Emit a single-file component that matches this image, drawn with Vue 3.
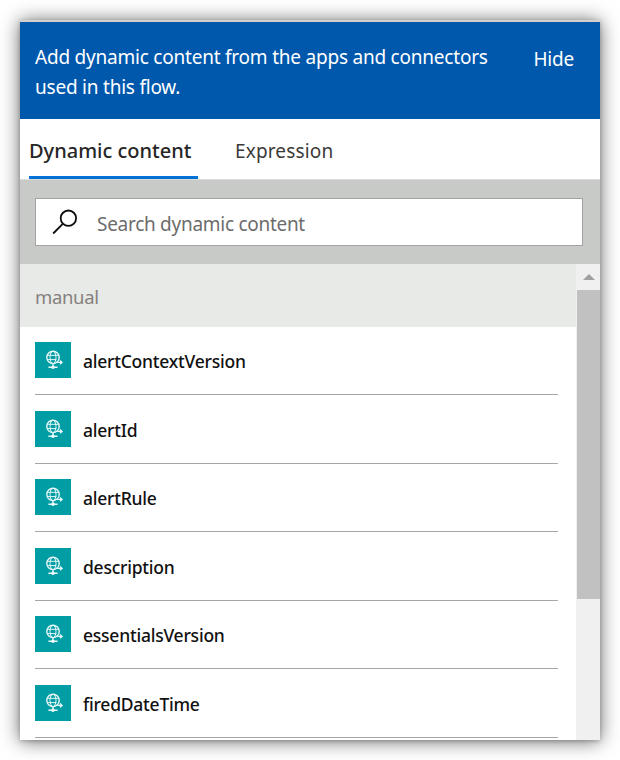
<script setup>
const tokens = [
  'alertContextVersion',
  'alertId',
  'alertRule',
  'description',
  'essentialsVersion',
  'firedDateTime',
]
</script>

<template>
  <main class="stage">
    <section class="panel">
      <header class="banner">
        <p class="intro">Add dynamic content from the apps and connectors<br />used in this flow.</p>
        <a class="hide">Hide</a>
      </header>

      <nav class="tabs">
        <a class="tab active">Dynamic content</a>
        <a class="tab expression">Expression</a>
      </nav>

      <div class="search-area">
        <div class="search">
          <svg class="lens" width="28" height="28" viewBox="0 0 28 28">
            <circle cx="17.4" cy="10.2" r="7.7" />
            <path d="M12 15.7 2.2 25.5" />
          </svg>
          <span class="placeholder">Search dynamic content</span>
        </div>
      </div>

      <div class="body">
        <div class="list">
          <h2 class="group">manual</h2>
          <ul class="rows">
            <li v-for="token in tokens" :key="token" class="row">
              <span class="badge">
                <svg width="36" height="36" viewBox="0 0 36 36">
                  <circle class="rim" cx="18" cy="15.4" r="6.2" />
                  <g class="grid">
                    <ellipse cx="18" cy="15.4" rx="3" ry="6.2" />
                    <path d="M12.4 13.3h11.2M12.4 17.6h9" />
                  </g>
                  <path class="link" d="M22.2 20.4h4.6M25 18.6l2 1.8-2 1.8M18 21.8v3.4M13.4 25.3h9.2" />
                  <circle class="node" cx="18" cy="25.3" r="1.8" />
                </svg>
              </span>
              <span class="name">{{ token }}</span>
            </li>
          </ul>
        </div>
        <div class="scrollbar">
          <div class="arrow">
            <svg width="12" height="6" viewBox="0 0 12 6"><path d="M0 6 6 0l6 6z" /></svg>
          </div>
          <div class="thumb"></div>
        </div>
      </div>
    </section>
  </main>
</template>

<style>
body {
  background: #fff;
  overflow: hidden;
}
</style>

<style scoped>
.stage {
  box-sizing: border-box;
  width: 620px;
  height: 760px;
  padding: 20px;
  font-family: 'Noto Sans', 'Open Sans', sans-serif;
  font-size: 19px;
}
.panel {
  box-sizing: border-box;
  display: flex;
  flex-direction: column;
  height: 720px;
  border-top: 2px solid #d2d0ce;
  background: #fff;
  box-shadow: 0 1px 18px rgba(0, 0, 0, 0.6), 0 1px 4px rgba(0, 0, 0, 0.2);
}
.banner {
  box-sizing: border-box;
  display: flex;
  justify-content: space-between;
  height: 97px;
  padding: 20px 26px 0 15px;
  background: #0058ad;
  color: #fff;
  line-height: 30px;
  white-space: nowrap;
}
.intro {
  margin: 0;
  letter-spacing: -0.22px;
}
.hide {
  margin-top: 2px;
  letter-spacing: -0.2px;
}
.tabs {
  box-sizing: border-box;
  display: flex;
  height: 61px;
  padding-left: 9px;
  border-bottom: 1px solid #dcdcdc;
  color: #3b3a39;
}
.tab {
  box-sizing: border-box;
  height: 60px;
  line-height: 64px;
  white-space: nowrap;
}
.active {
  width: 169px;
  margin-right: 37px;
  border-bottom: 3px solid #0072d6;
  color: #262626;
  font-size: 20px;
  font-weight: 500;
}
.expression {
  letter-spacing: 0.15px;
}
.search-area {
  box-sizing: border-box;
  height: 84px;
  padding: 18px 17px 18px 15px;
  background: #c8cac7;
}
.search {
  box-sizing: border-box;
  display: flex;
  align-items: center;
  height: 48px;
  padding-left: 15px;
  border: 1px solid #a3a3a1;
  background: #fff;
}
.lens {
  margin-top: -1px;
  fill: none;
  stroke: #0c0c0c;
  stroke-width: 1.8;
}
.placeholder {
  margin-left: 18px;
  padding-top: 3px;
  color: #6c6c6c;
  letter-spacing: -0.28px;
}
.body {
  display: flex;
  height: 476px;
  overflow: hidden;
}
.list {
  width: 556px;
}
.group {
  box-sizing: border-box;
  height: 62.5px;
  margin: 0;
  padding-left: 15px;
  background: #e8eae7;
  color: #85817e;
  font-size: 18.5px;
  font-weight: 400;
  letter-spacing: -0.35px;
  line-height: 65px;
}
.rows {
  margin: 0;
  padding: 0 18px 0 15px;
  list-style: none;
}
.row {
  box-sizing: border-box;
  display: flex;
  height: 68.5px;
  padding-top: 15.5px;
  border-bottom: 1px solid #a6a6a6;
}
.badge {
  width: 36px;
  height: 36px;
  background: #009da5;
}
.badge svg {
  display: block;
  fill: none;
  stroke: #e6f7f7;
}
.rim {
  stroke-width: 1.4;
}
.grid {
  stroke-width: 1;
}
.link {
  stroke-width: 1.4;
}
.node {
  fill: #eefafa;
  stroke: none;
}
.name {
  margin-left: 12px;
  color: #111;
  font-size: 17.5px;
  font-weight: 500;
  letter-spacing: -0.23px;
  line-height: 39.5px;
}
.scrollbar {
  width: 24px;
  background: #f0f0f0;
}
.arrow {
  display: flex;
  align-items: center;
  justify-content: center;
  height: 26px;
}
.arrow svg {
  margin-left: 1px;
}
.arrow path {
  fill: #a0a0a0;
}
.thumb {
  height: 309px;
  margin-left: 1px;
  background: #c1c1c1;
}
</style>
